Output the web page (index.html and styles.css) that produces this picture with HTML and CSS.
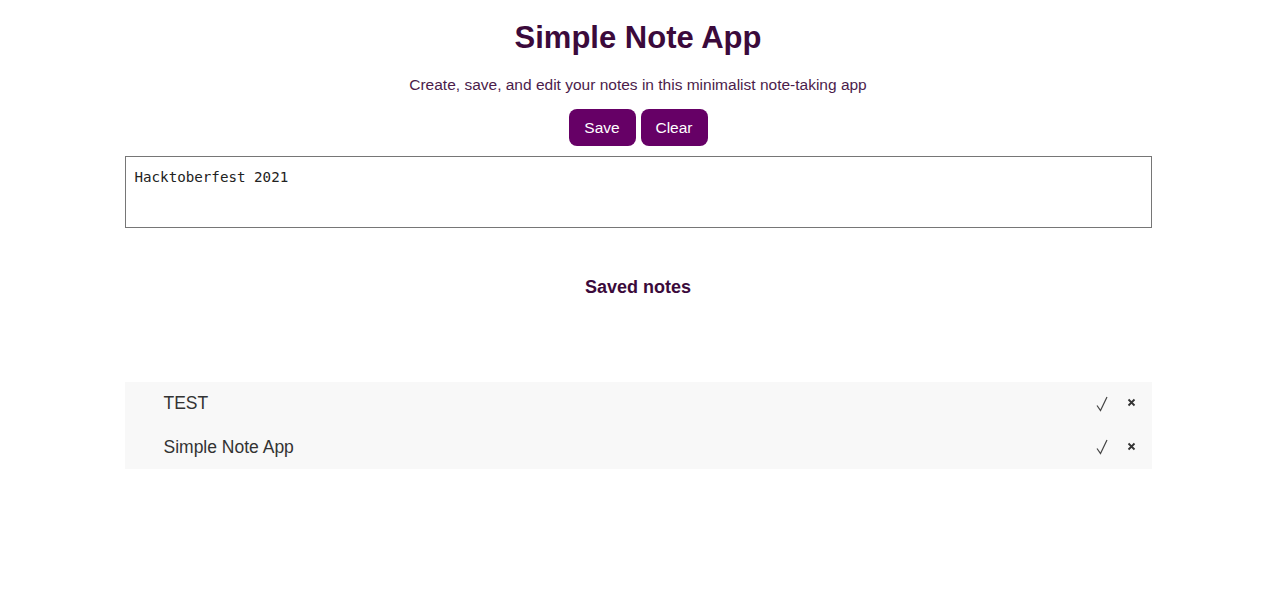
FILE: index.html
```html
<!DOCTYPE html>
<html>
<head>
<meta charset="utf-8">
<link rel="stylesheet" href="styles.css">
</head>
<body>
<div class="app">
  <h1 class="title">Simple Note App</h1>
  <p class="subtitle">Create, save, and edit your notes in this minimalist note-taking app</p>
  <div class="actions">
    <button class="btn">Save</button>
    <button class="btn">Clear</button>
  </div>
  <textarea class="editor">Hacktoberfest 2021</textarea>
  <h2 class="saved-title">Saved notes</h2>
  <ul class="notes">
    <li class="note"><span class="note-text">TEST</span><span class="note-actions"><svg class="check" width="12" height="16" viewBox="0 0 12 16"><path d="M1 9.5 L4.5 14.5 L11 1" fill="none" stroke="#444" stroke-width="1.2"/></svg><svg class="del" width="9" height="9" viewBox="0 0 9 9"><path d="M1.5 1.5 L7.5 7.5 M7.5 1.5 L1.5 7.5" fill="none" stroke="#333" stroke-width="1.8"/></svg></span></li>
    <li class="note"><span class="note-text">Simple Note App</span><span class="note-actions"><svg class="check" width="12" height="16" viewBox="0 0 12 16"><path d="M1 9.5 L4.5 14.5 L11 1" fill="none" stroke="#444" stroke-width="1.2"/></svg><svg class="del" width="9" height="9" viewBox="0 0 9 9"><path d="M1.5 1.5 L7.5 7.5 M7.5 1.5 L1.5 7.5" fill="none" stroke="#333" stroke-width="1.8"/></svg></span></li>
  </ul>
</div>
</body>
</html>
```
FILE: styles.css
```css
* { box-sizing: border-box; }
body {
  margin: 0;
  font-family: "Liberation Sans", Arial, sans-serif;
  background: #fff;
}
.app {
  width: 1027px;
  margin: 0 auto;
  position: relative;
  left: -2px;
  display: flex;
  flex-direction: column;
  align-items: center;
}
.title {
  margin: 19px 0 0;
  font-size: 31px;
  line-height: 37px;
  font-weight: bold;
  color: #3b0a3b;
}
.subtitle {
  margin: 20px 0 0;
  font-size: 15.5px;
  line-height: 18px;
  color: #4b1c4b;
}
.actions {
  margin-top: 15px;
  display: flex;
  gap: 5px;
}
.btn {
  background: #660066;
  color: #fff;
  border: none;
  border-radius: 8px;
  height: 37px;
  width: 67px;
  padding: 0;
  font-family: "Liberation Sans", Arial, sans-serif;
  font-size: 15.5px;
}
.editor {
  margin-top: 10px;
  width: 100%;
  height: 72px;
  border: 1px solid #767676;
  padding: 12px 9px;
  font-family: "DejaVu Sans Mono", monospace;
  font-size: 14.2px;
  line-height: 17px;
  color: #222;
  resize: none;
}
.saved-title {
  margin: 49px 0 0;
  font-size: 18px;
  line-height: 21px;
  font-weight: bold;
  color: #3b0a3b;
}
.notes {
  list-style: none;
  margin: 84px 0 0;
  padding: 0;
  width: 100%;
  background: #f8f8f8;
}
.note {
  display: flex;
  justify-content: space-between;
  align-items: center;
  height: 43.5px;
  padding: 0 16px 0 39px;
  font-size: 17.5px;
  color: #333;
}
.note-actions {
  display: flex;
  gap: 19px;
  align-items: center;
}
.check { display: block; }
.del { display: block; margin-top: -2px; }
```
